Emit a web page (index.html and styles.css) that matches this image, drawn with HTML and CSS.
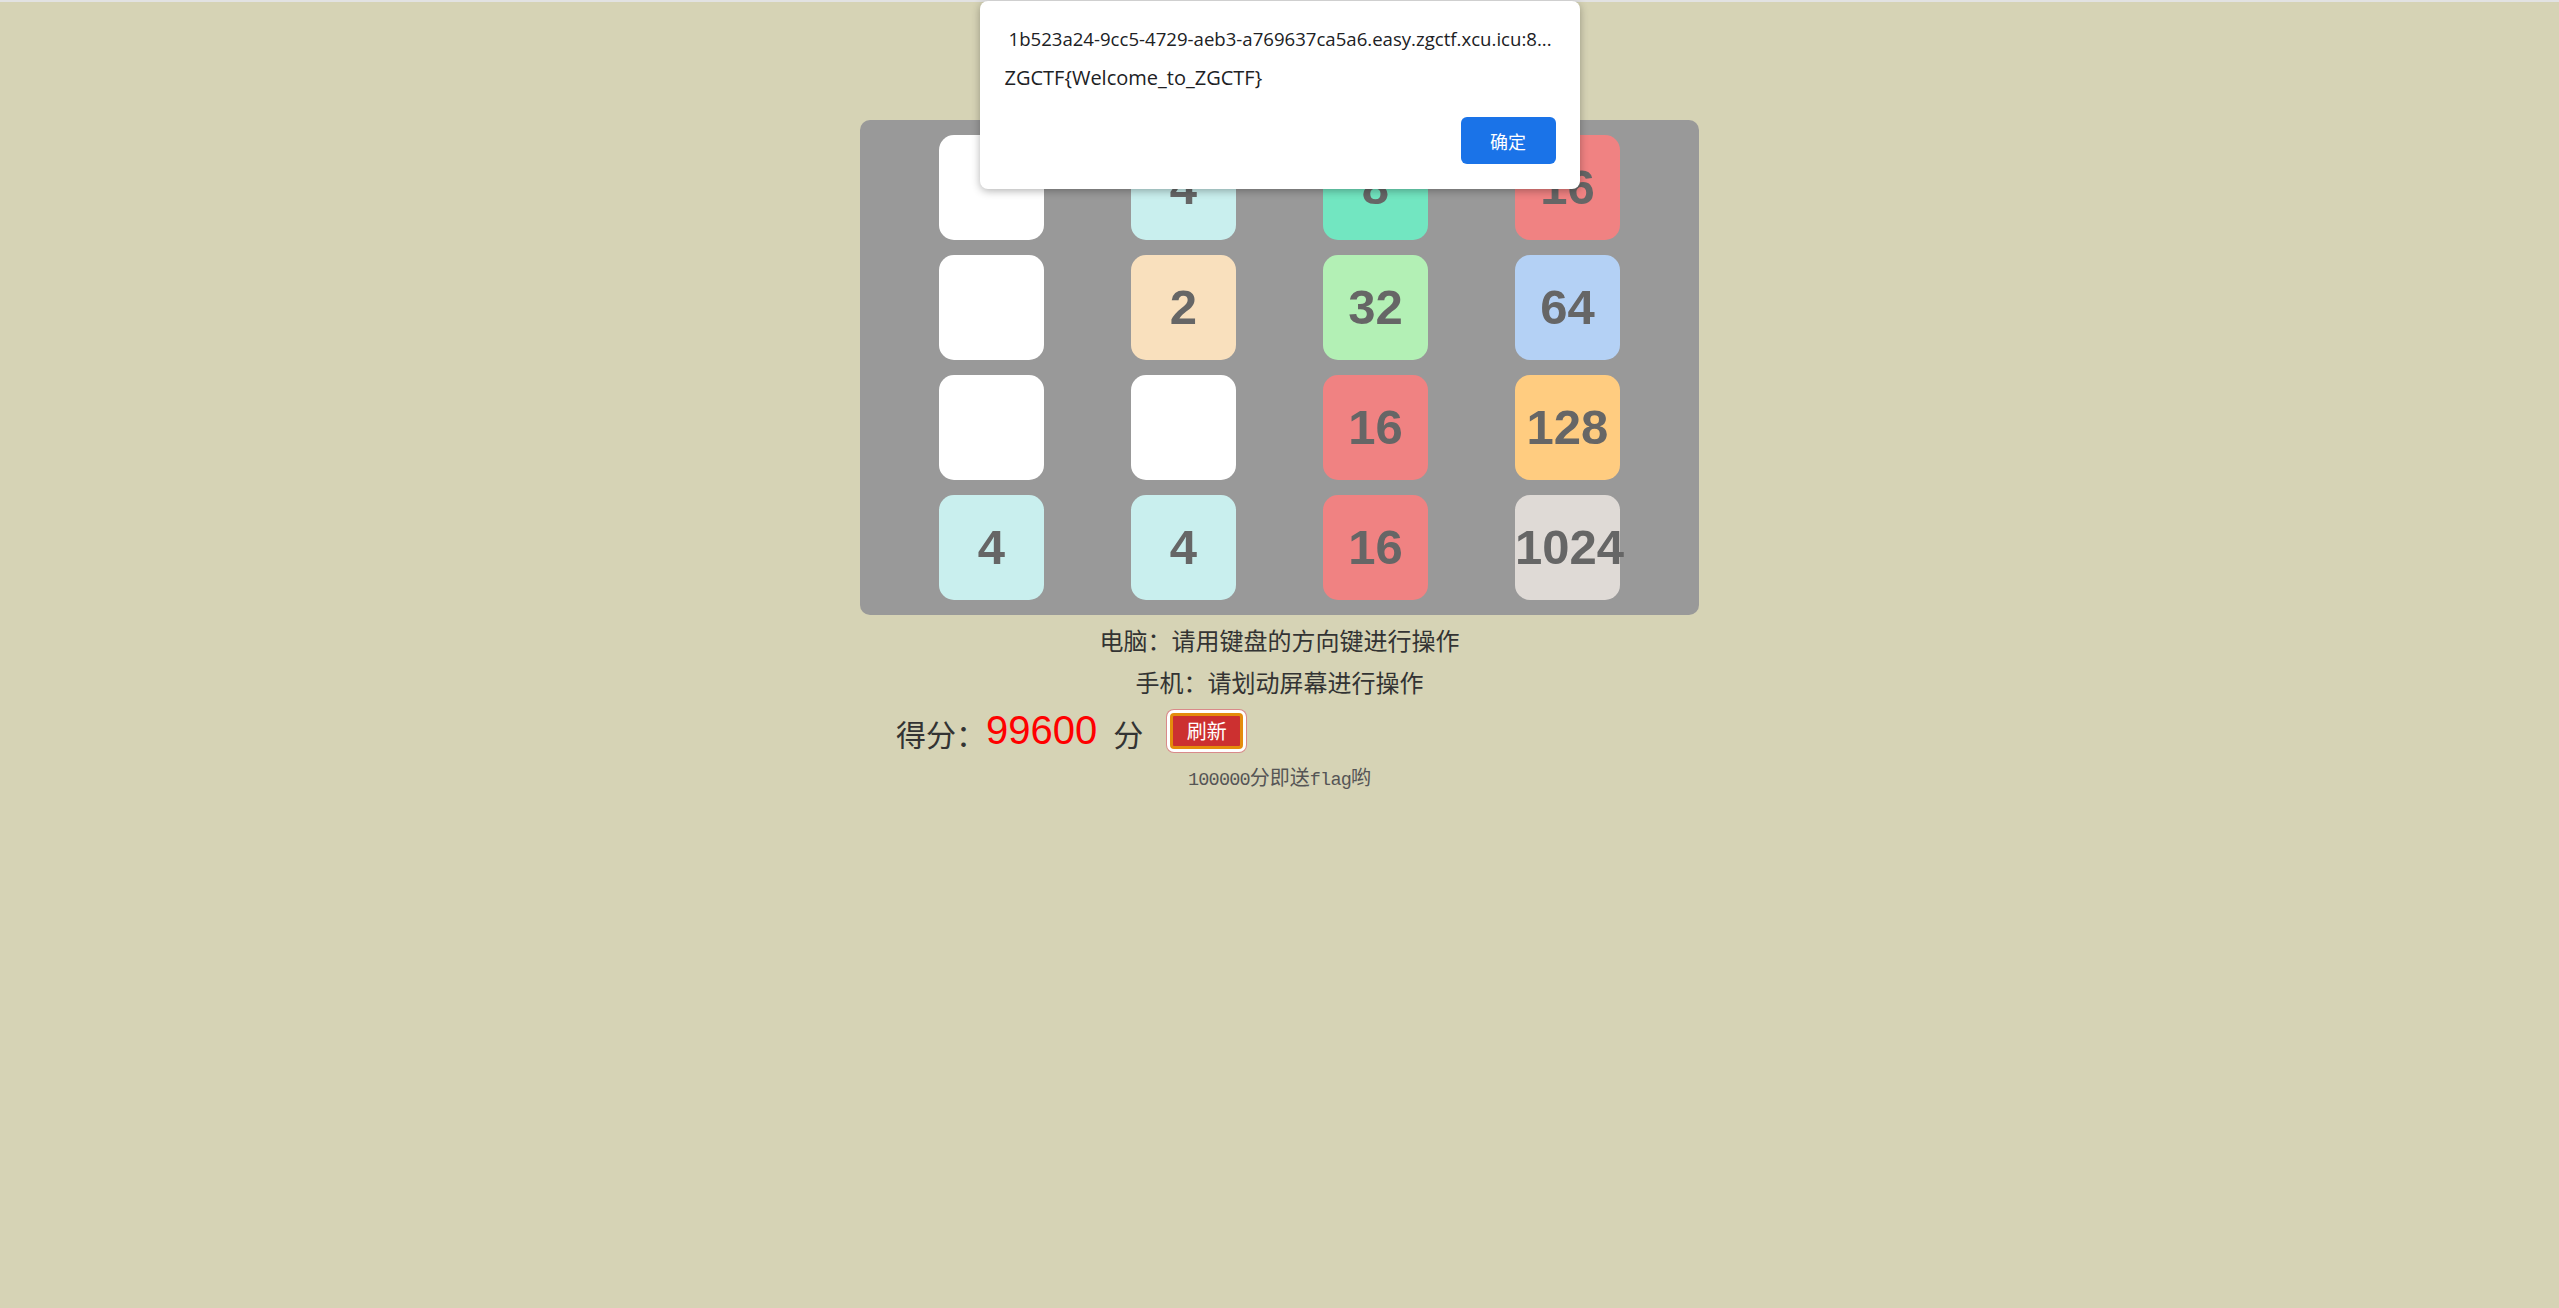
FILE: index.html
```html
<!DOCTYPE html>
<html lang="zh-CN">
<head>
<meta charset="utf-8">
<title>2048</title>
<link rel="stylesheet" href="styles.css">
</head>
<body>
<div class="page">
  <div class="board">
    <div class="tile t0"></div>
    <div class="tile t4">4</div>
    <div class="tile t8">8</div>
    <div class="tile t16">16</div>
    <div class="tile t0"></div>
    <div class="tile t2">2</div>
    <div class="tile t32">32</div>
    <div class="tile t64">64</div>
    <div class="tile t0"></div>
    <div class="tile t0"></div>
    <div class="tile t16">16</div>
    <div class="tile t128">128</div>
    <div class="tile t4">4</div>
    <div class="tile t4">4</div>
    <div class="tile t16">16</div>
    <div class="tile t1024">1024</div>
  </div>
  <p class="tip tip-first">电脑：请用键盘的方向键进行操作</p>
  <p class="tip">手机：请划动屏幕进行操作</p>
  <div class="score">
    <span class="score-label">得分：</span><span class="score-num">99600</span><span class="score-unit">分</span><button class="refresh">刷新</button>
  </div>
  <p class="hint"><span class="en">100000</span>分即送<span class="en">flag</span>哟</p>
</div>

<div class="dialog">
  <div class="dialog-title">1b523a24-9cc5-4729-aeb3-a769637ca5a6.easy.zgctf.xcu.icu:8...</div>
  <div class="dialog-msg">ZGCTF{Welcome_to_ZGCTF}</div>
  <div class="dialog-actions">
    <button class="dialog-ok">确定</button>
  </div>
</div>
</body>
</html>
```

FILE: styles.css
```css
html, body {
  margin: 0;
  padding: 0;
}

body {
  background: #d6d3b5;
  font-family: "Noto Sans CJK SC", "Liberation Sans", sans-serif;
  color: #333;
}

.page {
  border-top: 2px solid #e2e2e2;
  padding-top: 118px;
}

.board {
  width: 839px;
  margin: 0 auto;
  box-sizing: border-box;
  padding: 15px 0;
  background: #999999;
  border-radius: 10px;
  display: grid;
  grid-template-columns: repeat(4, 105px);
  grid-auto-rows: 105px;
  column-gap: 87px;
  row-gap: 15px;
  justify-content: center;
}

.tile {
  border-radius: 15px;
  font-family: "Liberation Sans", Arial, sans-serif;
  font-weight: bold;
  font-size: 49px;
  line-height: 105px;
  text-align: center;
  color: #666666;
  white-space: nowrap;
}

.t0 { background: #ffffff; }
.t2 { background: #f9e0bd; }
.t4 { background: #c9efee; }
.t8 { background: #72e6c1; }
.t16 { background: #f08282; }
.t32 { background: #b3f0b5; }
.t64 { background: #b4d1f5; }
.t128 { background: #ffcc80; }
.t1024 { background: #dfdad6; }

.tip {
  margin: 0;
  text-align: center;
  font-size: 24px;
  line-height: 42px;
  color: #333;
}

.tip-first {
  margin-top: 4px;
}

.score {
  width: 839px;
  margin: 0 auto;
  box-sizing: border-box;
  padding: 5px 0 0 36px;
  display: flex;
  align-items: center;
  height: 50px;
  font-size: 30px;
  color: #333;
}

.score-label {
  line-height: 40px;
  position: relative;
  top: 2px;
}

.score-num {
  font-family: "Liberation Sans", Arial, sans-serif;
  font-size: 40px;
  color: #ff0000;
  line-height: 40px;
  position: relative;
  top: -1px;
}

.score-unit {
  margin-left: 16px;
  line-height: 40px;
  position: relative;
  top: 2px;
}

.refresh {
  margin-left: 27px;
  width: 73px;
  height: 36px;
  padding: 0;
  background: #cc3030;
  border: 3px solid #e48c0c;
  border-radius: 4px;
  box-shadow: 0 0 0 3px #ffffff, 0 0 0 4px #d98a8a;
  color: #ffffff;
  font-family: "Noto Sans CJK SC", sans-serif;
  font-size: 20px;
  line-height: 28px;
  box-sizing: border-box;
}

.hint {
  margin: 9px 0 0;
  text-align: center;
  font-family: "Noto Sans CJK SC", sans-serif;
  font-size: 20px;
  line-height: 30px;
  color: #555;
}

.hint .en {
  font-family: "Liberation Mono", monospace;
  font-size: 18.5px;
  letter-spacing: -0.8px;
}

.dialog {
  position: absolute;
  top: 1px;
  left: calc(50% - 300px);
  width: 600px;
  height: 188px;
  box-sizing: border-box;
  background: #ffffff;
  border-radius: 8px;
  box-shadow: 0 2px 8px rgba(0, 0, 0, 0.3);
  padding: 0 24px 0 25px;
  display: flex;
  flex-direction: column;
  font-family: "Open Sans", "Noto Sans CJK SC", sans-serif;
  color: #202124;
}

.dialog-title {
  margin-top: 23px;
  padding-left: 4px;
  font-size: 18.6px;
  line-height: 30px;
  white-space: nowrap;
  overflow: hidden;
}

.dialog-msg {
  margin-top: 9px;
  font-size: 20px;
  line-height: 30px;
}

.dialog-actions {
  display: flex;
  justify-content: flex-end;
  margin-top: 24px;
}

.dialog-ok {
  width: 95px;
  height: 47px;
  border: none;
  border-radius: 6px;
  background: #1a73e8;
  color: #ffffff;
  font-family: "Noto Sans CJK SC", sans-serif;
  font-size: 18px;
  padding: 0;
}
```
